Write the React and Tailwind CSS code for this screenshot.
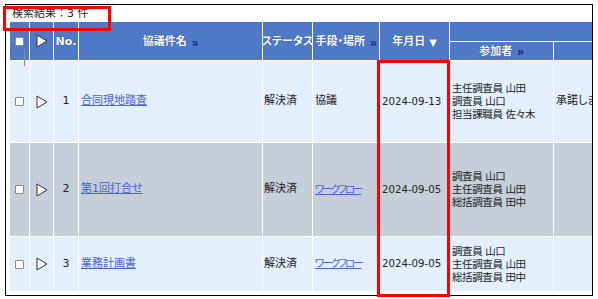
import React from 'react';

// 検索結果テーブル

const FONT = "font-['DejaVu_Sans','Noto_Sans_CJK_JP',sans-serif] [font-feature-settings:'palt']";

const Triangle = () => (
  <svg width="12" height="14" viewBox="0 0 12 14">
    <polygon points="1,1 11,7 1,13" fill="#ffffff" stroke="#333333" strokeWidth="1" />
  </svg>
);

const Check = () => (
  <span className="block w-[9px] h-[9px] border border-[#8a8a8a] bg-white rounded-[1px]" />
);

const Dbl = () => (
  <span className="text-[#1b2a8a] ml-[5px] text-[12px] leading-none font-bold [text-shadow:none] font-['Liberation_Sans',sans-serif]">»</span>
);

const rows = [
  {
    no: 1,
    title: '合同現地踏査',
    means: '協議',
    meansLink: false,
    date: '2024-09-13',
    members: ['主任調査員 山田', '調査員 山口', '担当課職員 佐々木'],
    note: '承諾しました',
    bg: 'bg-[#e3effc]',
  },
  {
    no: 2,
    title: '第1回打合せ',
    means: 'ワークフロー',
    meansLink: true,
    date: '2024-09-05',
    members: ['調査員 山口', '主任調査員 山田', '総括調査員 田中'],
    note: '',
    bg: 'bg-[#c5ced9]',
  },
  {
    no: 3,
    title: '業務計画書',
    means: 'ワークフロー',
    meansLink: true,
    date: '2024-09-05',
    members: ['調査員 山口', '主任調査員 山田', '総括調査員 田中'],
    note: '',
    bg: 'bg-[#e3effc]',
  },
];

const head = "bg-[#4d79c7] text-white font-bold text-[11px] [text-shadow:0_0_1px_#1c3568] flex items-center";
const cell = "flex items-center text-[#222]";
const link = "text-[#4a62dc] underline";

export default function App() {
  return (
    <div className={`relative w-[598px] h-[299px] bg-white ${FONT}`}>
      <div className="ml-[5px] mt-[4px] w-[588px] h-[292px] border border-black overflow-hidden">
        {/* 件数 */}
        <div className="h-[17px] leading-[18px] pl-[6px] text-[11px] text-[#222] [font-feature-settings:normal]">
          検索結果：3 件
        </div>

        {/* テーブル */}
        <div className="ml-[4px] w-max grid gap-px bg-white grid-cols-[19px_23px_24px_183px_49px_66px_69px_103px_120px] grid-rows-[19px_18px_81px_93px_54px]">
          <div className={`${head} row-span-2 justify-center`}><Check /></div>
          <div className={`${head} row-span-2 justify-center`}><Triangle /></div>
          <div className={`${head} row-span-2 justify-center pt-[3px]`}>No.</div>
          <div className={`${head} row-span-2 justify-center pt-[3px]`}>協議件名<Dbl /></div>
          <div className={`${head} row-span-2 justify-center pt-[3px] whitespace-nowrap`}>ステータス</div>
          <div className={`${head} row-span-2 justify-center pt-[3px] whitespace-nowrap`}>手段・場所<Dbl /></div>
          <div className={`${head} row-span-2 justify-center pt-[3px] whitespace-nowrap`}>
            年月日<span className="ml-[4px] text-[10px]">▼</span>
          </div>
          <div className={`${head} col-span-2`} />
          <div className={`${head} justify-center pt-[2px]`}>参加者<Dbl /></div>
          <div className={head} />

          {rows.map((r) => (
            <React.Fragment key={r.no}>
              <div className={`${cell} ${r.bg} justify-center`}><Check /></div>
              <div className={`${cell} ${r.bg} justify-center`}><Triangle /></div>
              <div className={`${cell} ${r.bg} justify-center text-[11px]`}>{r.no}</div>
              <div className={`${cell} ${r.bg} pl-[2px] text-[11px]`}><span className={link}>{r.title}</span></div>
              <div className={`${cell} ${r.bg} pl-[1px] text-[11px]`}>解決済</div>
              <div className={`${cell} ${r.bg} pl-[2px] whitespace-nowrap text-[11px]`}>
                {r.meansLink ? (
                  <span className={`${link} text-[10.5px] tracking-[-2px]`}>{r.means}</span>
                ) : (
                  r.means
                )}
              </div>
              <div className={`${cell} ${r.bg} pl-[2px] text-[10.2px]`}>{r.date}</div>
              <div className={`${cell} ${r.bg} pl-[2px] text-[10.5px] tracking-[-0.4px]`}>
                <div className="leading-[13px] whitespace-nowrap">
                  {r.members.map((m) => (
                    <div key={m}>{m}</div>
                  ))}
                </div>
              </div>
              <div className={`${cell} ${r.bg} pl-[2px] whitespace-nowrap text-[11px]`}>{r.note}</div>
            </React.Fragment>
          ))}
        </div>
      </div>

      {/* 注釈の赤枠 */}
      <div className="absolute left-[3px] top-[2px] w-[108px] h-[25px] border-[3px] border-[#ff0000]" />
      <div className="absolute left-[377px] top-[56px] w-[73px] h-[237px] border-[3px] border-[#ff0000]" />
      <div className="absolute left-[24px] top-[45px] w-px h-[17px] bg-[#b8863b]" />
    </div>
  );
}
